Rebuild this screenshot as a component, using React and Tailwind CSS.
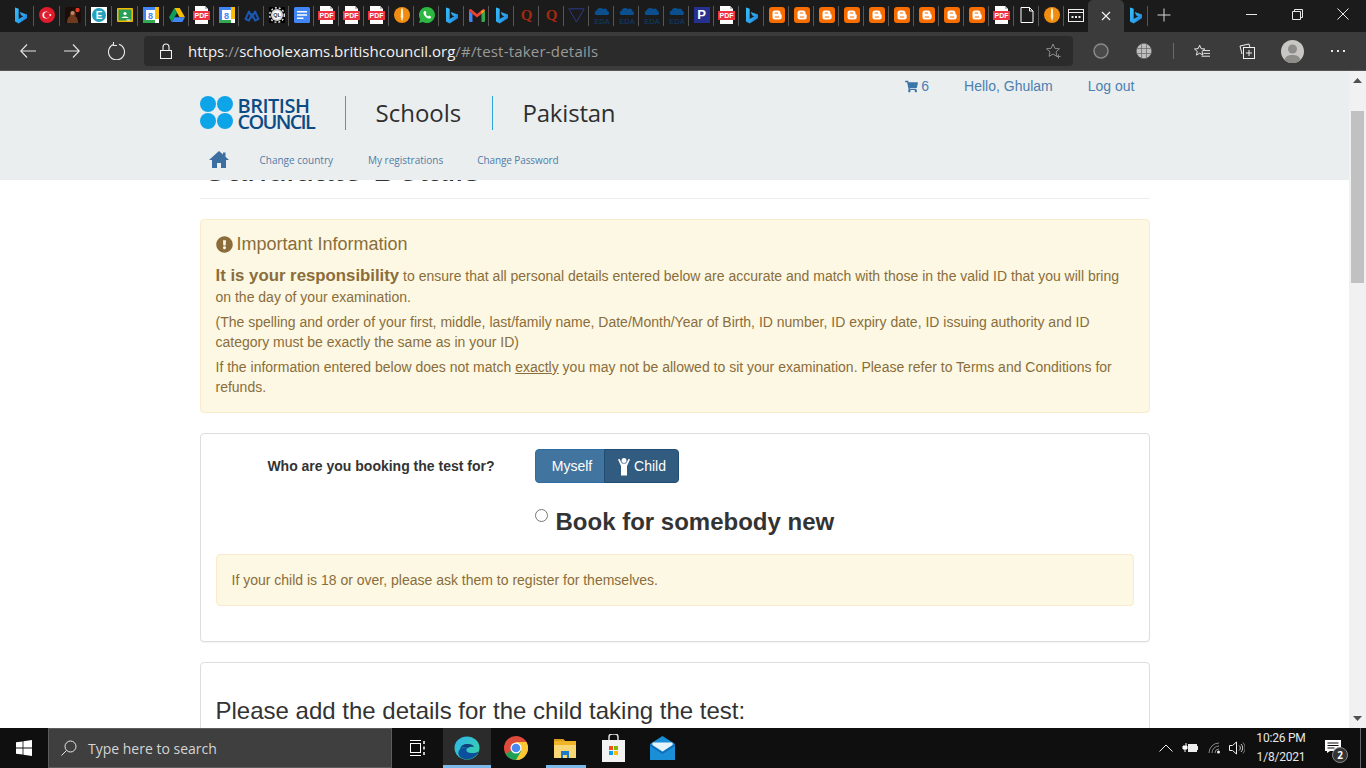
import React from 'react';
import { FaShoppingCart, FaExclamationCircle } from 'react-icons/fa';

const Bing = () => (
  <svg width="12" height="17" viewBox="5 1 13 17.600">
    <defs>
      <linearGradient id="bingGrad" x1="0" y1="0" x2="1" y2="1">
        <stop offset="0" stopColor="#37bdff" />
        <stop offset="0.6" stopColor="#2aa3ea" />
        <stop offset="1" stopColor="#1b66d8" />
      </linearGradient>
    </defs>
    <path d="M5 1l4 1.400v11.200l5-2.900-2.400-1.200-1.500-3.600 8 2.800v4.100L9 18.600l-4-2.200z" fill="url(#bingGrad)" />
  </svg>
);

const Pdf = () => (
  <svg width="17" height="18" viewBox="0 0 17 18">
    <path d="M2 0h10l3 3v15H2z" fill="#fff" />
    <path d="M12 0v3h3z" fill="#bbb" />
    <rect x="0" y="5" width="17" height="9" fill="#ee3340" />
    <text x="8.500" y="12.300" textAnchor="middle" fontSize="7" fontWeight="700" fontFamily="Liberation Sans" fill="#fff">PDF</text>
  </svg>
);

const Calendar = () => (
  <svg width="16" height="16" viewBox="0 0 16 16">
    <rect width="16" height="16" fill="#fff" />
    <path d="M0 0h12v3H3v10H0z" fill="#4285f4" />
    <path d="M12 0h4v12h-4z" fill="#fbbc04" />
    <path d="M0 13h12v3H0z" fill="#34a853" />
    <text x="7.500" y="11.500" textAnchor="middle" fontSize="9" fontWeight="700" fontFamily="Liberation Sans" fill="#4285f4">8</text>
  </svg>
);

const Blogger = () => (
  <svg width="16" height="16" viewBox="0 0 16 16">
    <rect width="16" height="16" rx="3" fill="#f76d00" />
    <path d="M6 3.500h3a2.500 2.500 0 012.500 2.500v.8c0 .5.4.7.7.7.4 0 .5.3.5.6V10a2.500 2.500 0 01-2.500 2.500H6A2.500 2.500 0 013.500 10V6A2.500 2.500 0 016 3.500z" fill="#fff" />
    <path d="M6.200 6h2.400M6.200 10h3.600" stroke="#f76d00" strokeWidth="1.200" strokeLinecap="round" />
  </svg>
);

const OrangeI = () => (
  <svg width="16" height="16" viewBox="0 0 16 16">
    <circle cx="8" cy="8" r="8" fill="#f08c12" />
    <path d="M7.200 1.500h1.600L9.300 10 8 14.500 6.700 10z" fill="#fff3d0" />
  </svg>
);

const Eda = () => (
  <svg width="18" height="18" viewBox="0 0 18 18">
    <path d="M3 9a2.500 2.500 0 01.6-4.600A4 4 0 0110 3a3 3 0 014.600 2.300A2 2 0 0115 9z" fill="#0b4f8f" />
    <text x="9" y="17.500" textAnchor="middle" fontSize="7.500" fontFamily="Liberation Sans" fill="#0b3f75">EDA</text>
  </svg>
);

const Letter = ({ ch }) => (
  <span className="font-['Liberation_Serif',serif] text-[15px] leading-none font-bold text-[#a02a10]">{ch}</span>
);

const tabIcons = {
  bing: <Bing />,
  pdf: <Pdf />,
  cal: <Calendar />,
  blogger: <Blogger />,
  orange: <OrangeI />,
  eda: <Eda />,
  q: <Letter ch="Q" />,
  target: (
    <svg width="16" height="16" viewBox="0 0 16 16">
      <circle cx="8" cy="8" r="8" fill="#e01b2c" />
      <circle cx="7" cy="8" r="3.600" fill="#fff" />
      <circle cx="8" cy="8" r="2.900" fill="#e01b2c" />
      <circle cx="11.300" cy="8" r="1" fill="#fff" />
    </svg>
  ),
  photo: (
    <svg width="16" height="16" viewBox="0 0 16 16">
      <rect width="16" height="16" rx="2" fill="#1b0d08" />
      <path d="M2 16c0-4 1-6 3-7 0-4 2-6 4-5s2 4 1 5c2 1 3 3 3 7z" fill="#6e3a20" />
      <circle cx="7.500" cy="6" r="2" fill="#b98a68" />
      <circle cx="12.500" cy="3" r="2.200" fill="#e33a22" />
    </svg>
  ),
  e: (
    <svg width="16" height="16" viewBox="0 0 16 16">
      <rect width="16" height="16" fill="#fff" />
      <circle cx="8" cy="8" r="7" fill="#25a0bd" />
      <text x="8" y="11.500" textAnchor="middle" fontSize="10" fontWeight="700" fontFamily="Liberation Sans" fill="#fff">E</text>
    </svg>
  ),
  classroom: (
    <svg width="16" height="14" viewBox="0 0 16 14">
      <rect width="16" height="14" rx="1" fill="#f5b800" />
      <rect x="1.500" y="1.500" width="13" height="11" fill="#2a9d57" />
      <circle cx="8" cy="5.500" r="1.600" fill="#fff" />
      <path d="M4.500 10c.5-2 6.500-2 7 0z" fill="#fff" />
      <path d="M9.500 11.500h4v1h-4z" fill="#fff" />
    </svg>
  ),
  drive: (
    <svg width="16" height="14" viewBox="0 0 16 14">
      <path d="M5.300 0h5.400L16 9.200h-5.400z" fill="#fbbc04" />
      <path d="M5.300 0L0 9.200 2.700 14l5.300-9.200z" fill="#0f9d58" />
      <path d="M2.700 14h10.600L16 9.200H5.400z" fill="#4285f4" />
    </svg>
  ),
  meta: (
    <svg width="16" height="14" viewBox="0 0 16 14">
      <path d="M1.500 11L5 3.500l3 6 3-6 3.500 7.500-3.500 1.500L8 6l-3 6.500z" fill="none" stroke="#1a56b0" strokeWidth="2" strokeLinejoin="round" />
    </svg>
  ),
  gear: (
    <svg width="16" height="16" viewBox="0 0 16 16">
      <rect width="16" height="16" fill="#000" />
      <circle cx="8" cy="8" r="6" fill="#d6d6d6" />
      <circle cx="8" cy="8" r="7.300" fill="none" stroke="#d6d6d6" strokeWidth="1.500" strokeDasharray="2 2" />
      <circle cx="8" cy="8" r="4.200" fill="#fff" />
      <text x="8" y="10" textAnchor="middle" fontSize="5.500" fontWeight="700" fontFamily="Liberation Sans" fill="#333">QL</text>
    </svg>
  ),
  docs: (
    <svg width="16" height="16" viewBox="0 0 16 16">
      <rect width="16" height="16" rx="1.500" fill="#4285f4" />
      <path d="M3 4h10v1.400H3zM3 7.300h10v1.400H3zM3 10.600h6.500V12H3z" fill="#fff" />
    </svg>
  ),
  whatsapp: (
    <svg width="16" height="16" viewBox="0 0 16 16">
      <path d="M8 0a8 8 0 00-6.800 12.200L0 16l3.900-1.100A8 8 0 108 0z" fill="#2bb741" />
      <path d="M5.500 4c-.8.600-1.200 1.700-.8 3 .6 2 2.500 3.900 4.500 4.500 1.300.4 2.300 0 3-.9l-.3-1.200-1.900-.8-.8.900c-1-.4-2-1.400-2.500-2.500l.8-.9-.7-1.900z" fill="#fff" />
    </svg>
  ),
  gmail: (
    <svg width="16" height="13" viewBox="0 0 16 13">
      <path d="M0 1.500v10c0 .8.500 1.500 1.200 1.500H3.500V5z" fill="#4285f4" />
      <path d="M16 1.500v10c0 .8-.500 1.500-1.200 1.500h-2.300V5z" fill="#34a853" />
      <path d="M0 1.500C0 .2 1.500-.4 2.500.4L8 5l5.500-4.600c1-.8 2.500-.2 2.500 1.100L12.500 5 8 8.500 3.500 5z" fill="#ea4335" />
      <path d="M12.500 1.800L16 1.500 12.500 5z" fill="#fbbc04" />
    </svg>
  ),
  tri: (
    <svg width="17" height="15" viewBox="0 0 17 15">
      <path d="M.8.800h15.400L8.500 14z" fill="none" stroke="#2d3a8c" strokeWidth="1" />
    </svg>
  ),
  p: (
    <span className="flex h-[16px] w-[16px] items-center justify-center bg-[#26308f] font-['Liberation_Sans',sans-serif] text-[13px] font-bold text-white">P</span>
  ),
  doc: (
    <svg width="14" height="16" viewBox="0 0 14 16">
      <path d="M1 .5h8.500L13 4v11.500H1zM9.500.5V4H13" fill="none" stroke="#fff" strokeWidth="1" />
    </svg>
  ),
};

const tabs = [
  'bing', 'target', 'photo', 'e', 'classroom', 'cal',
  'drive', 'pdf', 'cal', 'meta', 'gear', 'docs', 'pdf', 'pdf', 'pdf', 'orange', 'whatsapp', 'bing', 'gmail', 'bing',
  'q', 'q', 'tri', 'eda', 'eda', 'eda', 'eda', 'p', 'pdf', 'bing',
  'blogger', 'blogger', 'blogger', 'blogger', 'blogger', 'blogger', 'blogger', 'blogger', 'blogger',
  'pdf', 'doc', 'orange',
];

const TabStrip = () => (
  <div className="flex h-[32px] bg-[#1b1b1b] pl-[8px]">
    {tabs.map((name, i) => (
      <div key={i} className={`relative flex h-full shrink-0 items-center justify-center pb-[2px] ${i < 6 ? 'w-[26px]' : 'w-[25px]'}`}>
        {tabIcons[name]}
        <span className="absolute top-[6px] right-0 h-[20px] w-px bg-[#565656]" />
      </div>
    ))}
    <div className="flex h-full w-[24px] shrink-0 items-center justify-center pb-[2px]">
      <svg width="16" height="13" viewBox="0 0 16 13">
        <rect x=".5" y=".5" width="15" height="12" fill="none" stroke="#eee" />
        <path d="M1 3.500h14" stroke="#eee" />
        <path d="M3.500 7h2v2h-2zM7 7h2v2H7zM10.500 7h2v2h-2z" fill="#eee" />
      </svg>
    </div>
    <div className="flex h-full w-[36px] shrink-0 items-center justify-center rounded-t-[5px] bg-[#3b3b3b]">
      <svg width="10" height="10" viewBox="0 0 10 10">
        <path d="M1 1l8 8M9 1l-8 8" stroke="#f0f0f0" strokeWidth="1.200" />
      </svg>
    </div>
    <div className="relative flex h-full w-[24px] shrink-0 items-center justify-center pb-[2px]">
      <Bing />
      <span className="absolute top-[6px] right-0 h-[20px] w-px bg-[#565656]" />
    </div>
    <div className="flex h-full w-[32px] shrink-0 items-center justify-center pb-[2px]">
      <svg width="14" height="14" viewBox="0 0 14 14">
        <path d="M7 .5v13M.5 7h13" stroke="#d8d8d8" strokeWidth="1" />
      </svg>
    </div>
    <div className="ml-auto flex h-full">
      <div className="flex w-[46px] items-center justify-center pb-[4px]">
        <svg width="11" height="1" viewBox="0 0 11 1"><path d="M0 .5h11" stroke="#e8e8e8" /></svg>
      </div>
      <div className="flex w-[46px] items-center justify-center pb-[4px]">
        <svg width="11" height="11" viewBox="0 0 11 11">
          <path d="M.5 2.500h8v8h-8zM2.500 2.500v-2h8v8h-2" fill="none" stroke="#e8e8e8" />
        </svg>
      </div>
      <div className="flex w-[46px] items-center justify-center pb-[4px]">
        <svg width="12" height="12" viewBox="0 0 12 12"><path d="M.5.500l11 11M11.500.500l-11 11" stroke="#e8e8e8" /></svg>
      </div>
    </div>
  </div>
);

const Toolbar = () => (
  <div className="flex h-[39px] items-start border-b border-[#555] bg-[#3b3b3b]">
    <div className="flex h-[38px] w-[144px] shrink-0 items-center">
      <div className="flex w-[56px] justify-center">
        <svg width="16" height="14" viewBox="0 0 16 14"><path d="M7 .5L.8 7 7 13.500M.8 7H16" fill="none" stroke="#e6e6e6" strokeWidth="1.100" /></svg>
      </div>
      <div className="flex w-[32px] justify-center">
        <svg width="16" height="14" viewBox="0 0 16 14"><path d="M9 .5L15.200 7 9 13.500M15.200 7H0" fill="none" stroke="#e6e6e6" strokeWidth="1.100" /></svg>
      </div>
      <div className="flex w-[56px] justify-center">
        <svg width="17" height="18" viewBox="0 0 17 18"><path d="M6 2.300A8 8 0 1011 2.300M5.500 0v3.500H9" fill="none" stroke="#e6e6e6" strokeWidth="1.100" /></svg>
      </div>
    </div>
    <div className="mt-[4px] flex h-[30px] w-[929px] shrink-0 items-center rounded-[4px] bg-[#2b2b2b] pl-[16px] pr-[11px] font-['Open_Sans',sans-serif] text-[15px]">
      <svg width="12" height="16" viewBox="0 0 12 16" className="mr-[16px] shrink-0">
        <path d="M.5 7.500h11v8H.5zM3 7.500V4a3 3 0 016 0v3.500" fill="none" stroke="#f2f2f2" strokeWidth="1.100" />
      </svg>
      <span className="text-[#f2f2f2]">https</span>
      <span className="text-[#9a9a9a]">://</span>
      <span className="text-[#f2f2f2]">schoolexams.britishcouncil.org</span>
      <span className="tracking-[0.2px] text-[#9a9a9a]">/#/test-taker-details</span>
      <svg width="16" height="16" viewBox="0 0 16 16" className="ml-auto shrink-0">
        <path d="M7 1l1.900 4.400 4.600.400-3.500 3 1 4.600L7 11l-4 2.400 1-4.600-3.500-3 4.600-.400z" fill="none" stroke="#8c8c8c" />
        <path d="M12.500 11.500v4M10.500 13.500h4" stroke="#8c8c8c" />
      </svg>
    </div>
    <div className="flex h-[38px] flex-1 items-center">
      <div className="flex w-[56px] justify-center">
        <svg width="16" height="16" viewBox="0 0 16 16"><circle cx="8" cy="8" r="7" fill="#4a4a4a" stroke="#8a8a8a" strokeWidth="1.500" /></svg>
      </div>
      <div className="flex w-[30px] justify-center">
        <svg width="16" height="16" viewBox="0 0 16 16">
          <circle cx="8" cy="8" r="7.500" fill="#bdbdbd" />
          <path d="M0 5.500h16M0 10.500h16M5.500 0v16M10.500 0v16" stroke="#666" strokeWidth=".7" />
        </svg>
      </div>
      <span className="ml-[14px] h-[16px] w-px bg-[#6a6a6a]" />
      <div className="ml-[20px] flex w-[16px] justify-center">
        <svg width="17" height="15" viewBox="0 0 17 15">
          <path d="M6 .8l1.600 3.700 3.900.300-3 2.600.900 3.900L6 9.300l-3.400 2 .9-3.900-3-2.600 3.900-.300z" fill="none" stroke="#f0f0f0" />
          <path d="M9.500 6.500H17M10 9.500h7M8 12.500h9" stroke="#f0f0f0" />
        </svg>
      </div>
      <div className="ml-[29px] flex w-[16px] justify-center">
        <svg width="16" height="16" viewBox="0 0 16 16">
          <path d="M3 11L1 3l9-2 .8 3" fill="none" stroke="#f0f0f0" />
          <rect x="4.500" y="4.500" width="11" height="11" fill="#3b3b3b" stroke="#f0f0f0" />
          <path d="M10 7v6M7 10h6" stroke="#f0f0f0" />
        </svg>
      </div>
      <div className="ml-[26px] flex w-[23px] justify-center">
        <svg width="23" height="23" viewBox="0 0 23 23">
          <circle cx="11.500" cy="11.500" r="11.500" fill="#c9c7c3" />
          <circle cx="11.500" cy="9" r="4.500" fill="#8f8d8a" />
          <path d="M3.500 20c1-4 4-5 8-5s7 1 8 5a11.500 11.500 0 01-16 0z" fill="#8f8d8a" />
        </svg>
      </div>
      <div className="ml-[26px] flex w-[16px] justify-center gap-[4px]">
        <span className="h-[2px] w-[2px] bg-[#e6e6e6]" />
        <span className="h-[2px] w-[2px] bg-[#e6e6e6]" />
        <span className="h-[2px] w-[2px] bg-[#e6e6e6]" />
      </div>
    </div>
  </div>
);

const SiteHeader = () => (
  <header className="relative z-10 h-[109px] bg-[#ebeeef]">
    <div className="mx-auto flex w-[950px] flex-col">
      <div className="flex">
        <div className="flex pt-[25px]">
          <div className="grid h-[33px] w-[33px] grid-cols-2 gap-px">
            <span className="rounded-full bg-[#0ea4e8]" />
            <span className="rounded-full bg-[#0ea4e8]" />
            <span className="rounded-full bg-[#0ea4e8]" />
            <span className="rounded-full bg-[#0ea4e8]" />
          </div>
          <div className="ml-[5px] flex w-[77px] flex-col font-['Open_Sans',sans-serif] text-[20px] leading-[15.500px] font-semibold text-[#0b4c85]">
            <span className="mt-[2px] tracking-[-0.500px]">BRITISH</span>
            <span className="tracking-[-1.700px]">COUNCIL</span>
          </div>
        </div>
        <div className="mt-[25px] ml-[30px] flex h-[34px] w-[117px] items-center border-l border-[#2ba6dc] pl-[30px] font-['Open_Sans',sans-serif] text-[24px] text-[#2f2f2f]">Schools</div>
        <div className="mt-[25px] ml-[30px] flex h-[34px] items-center border-l border-[#2ba6dc] pl-[30px] font-['Open_Sans',sans-serif] text-[24px] tracking-[-0.200px] text-[#2f2f2f]">Pakistan</div>
        <div className="ml-auto flex items-center self-start pt-[7px] pr-[15px] font-['Liberation_Sans',sans-serif] text-[14px] leading-[16px] text-[#4a80b0]">
          <FaShoppingCart className="text-[13px] text-[#3c76a8]" />
          <span className="ml-[3px]">6</span>
          <span className="ml-[35px]">Hello, Ghulam</span>
          <span className="ml-[35px]">Log out</span>
        </div>
      </div>
      <nav className="mt-[22px] flex items-center font-['Open_Sans',sans-serif] text-[10px] leading-[16px] font-medium text-[#4f7ca6]">
        <svg width="20" height="17" viewBox="0 0 20 17" className="ml-[9px] -mt-[1px]">
          <path d="M10 0L0 9h3v8h5v-5h4v5h5V9h3l-3.500-3.200V1.500h-2.500v2z" fill="#3c6fa0" />
        </svg>
        <span className="ml-[31px]">Change country</span>
        <span className="ml-[35px]">My registrations</span>
        <span className="ml-[34px] tracking-[-0.100px]">Change Password</span>
      </nav>
    </div>
  </header>
);

const Content = () => (
  <div className="mx-auto -mt-[31px] flex w-[950px] flex-col font-['Liberation_Sans',sans-serif] text-[14px] text-[#333]">
    <h1 className="border-b border-[#eee] pb-[9px] pl-[2px] text-[36px] leading-[40px] tracking-[-0.300px] text-[#333]">Candidate Details</h1>
    <div className="mt-[20px] rounded-[4px] border border-[#faebcc] bg-[#fcf8e3] px-[15px] pt-[14px] pb-[15px] text-[#8a6d3b]">
      <h4 className="flex items-center text-[18px] leading-[20px]">
        <FaExclamationCircle className="mr-[4px] text-[17px]" />
        Important Information
      </h4>
      <p className="mt-[11px] leading-[21px]">
        <strong className="text-[16.800px]">It is your responsibility</strong> to ensure that all personal details entered below are accurate and match with those in the valid ID that you will bring on the day of your examination.
      </p>
      <p className="mt-[4px] leading-[20px]">(The spelling and order of your first, middle, last/family name, Date/Month/Year of Birth, ID number, ID expiry date, ID issuing authority and ID category must be exactly the same as in your ID)</p>
      <p className="mt-[5px] leading-[20px]">
        If the information entered below does not match <u>exactly</u> you may not be allowed to sit your examination. Please refer to Terms and Conditions for refunds.
      </p>
    </div>

    <section className="mt-[20px] h-[209px] rounded-[4px] border border-[#ddd] bg-white px-[15px] pt-[15px] shadow-[0_1px_1px_rgba(0,0,0,0.05)]">
      <div className="flex items-center">
        <label className="w-[279px] text-right font-bold">Who are you booking the test for?</label>
        <div className="ml-[40px] flex h-[34px]">
          <button className="w-[70px] rounded-l-[4px] border border-[#2e6da4] bg-[#41759f] pl-[5px] text-white">Myself</button>
          <button className="-ml-px flex w-[75px] items-center justify-center rounded-r-[4px] border border-[#204d74] bg-[#315b7f] text-white">
            <svg width="14" height="19" viewBox="0 0 14 19" className="mr-[3px] ml-[1px]">
              <circle cx="7" cy="3.500" r="2.500" fill="#fff" />
              <path d="M1 2.500l1.300-.800L5 6.500h4l2.700-4.800 1.300.8L10 9v9.500H4V9z" fill="#fff" />
            </svg>
            Child
          </button>
        </div>
      </div>
      <div className="mt-[18px] ml-[319px] flex items-start">
        <input type="radio" className="mt-[8px] h-[13px] w-[13px] shrink-0 accent-[#555]" readOnly />
        <span className="ml-[8px] text-[24px] leading-[42px] font-bold">Book for somebody new</span>
      </div>
      <div className="mt-[11px] rounded-[4px] border border-[#faebcc] bg-[#fcf8e3] px-[15px] py-[15px] leading-[20px] text-[#8a6d3b]">
        If your child is 18 or over, please ask them to register for themselves.
      </div>
    </section>

    <section className="mt-[20px] h-[100px] rounded-[4px] border border-[#ddd] bg-white px-[15px] pt-[30px]">
      <h3 className="text-[24px] leading-[36px]">Please add the details for the child taking the test:</h3>
    </section>
  </div>
);

const Scrollbar = () => (
  <div className="flex w-[17px] shrink-0 flex-col items-center bg-[#f1f1f1]">
    <svg width="9" height="5" viewBox="0 0 9 5" className="mt-[7px]"><path d="M4.500 0L9 5H0z" fill="#505050" /></svg>
    <div className="mt-[28px] h-[172px] w-[13px] bg-[#c1c1c1]" />
    <svg width="9" height="5" viewBox="0 0 9 5" className="mt-auto mb-[7px]"><path d="M4.500 5L9 0H0z" fill="#505050" /></svg>
  </div>
);

const Taskbar = () => (
  <div className="flex h-[40px] items-stretch bg-[#0f0f0f] font-['Open_Sans',sans-serif] text-[#e6e6e6]">
    <div className="flex w-[48px] items-center justify-center">
      <svg width="16" height="16" viewBox="0 0 16 16">
        <path d="M0 2.300L6.600 1.400v6.200H0zM7.400 1.300L16 0v7.600H7.400zM0 8.400h6.600v6.200L0 13.700zM7.400 8.400H16V16l-8.600-1.300z" fill="#fff" />
      </svg>
    </div>
    <div className="flex w-[344px] items-center border border-[#5c5c5c] bg-[#3f3f3f] pl-[12px] text-[14px] text-[#d4d4d4]">
      <svg width="16" height="16" viewBox="0 0 16 16">
        <circle cx="9.500" cy="6.500" r="5.500" fill="none" stroke="#e8e8e8" />
        <path d="M5.500 10.500L.5 15.500" stroke="#e8e8e8" />
      </svg>
      <span className="ml-[11px]">Type here to search</span>
    </div>
    <div className="flex w-[51px] items-center justify-center">
      <svg width="17" height="16" viewBox="0 0 17 16">
        <path d="M1 .5h11M1 15.500h11" stroke="#fff" />
        <rect x="1.500" y="3.500" width="10" height="9" fill="none" stroke="#fff" />
        <path d="M15 1v3M15 6.500v3M15 12v3" stroke="#fff" strokeWidth="1.500" />
      </svg>
    </div>
    <div className="flex w-[48px] items-center justify-center border-b-[3px] border-[#7cb8e8] bg-[#2b2b2b] pt-[3px]">
      <svg width="26" height="24" viewBox="0 0 26 30" preserveAspectRatio="none">
        <defs>
          <linearGradient id="edgeGrad" x1="0" y1="0" x2="1" y2="1">
            <stop offset="0" stopColor="#2fb6ee" />
            <stop offset="1" stopColor="#39d3a0" />
          </linearGradient>
        </defs>
        <ellipse cx="13" cy="15" rx="12.500" ry="14.500" fill="url(#edgeGrad)" />
        <path d="M25 19c-2 6-7 10-12 10C6 29 3 23 5 18c1.500-3.500 6-5 9-3-2 1-2.500 4 .5 5.500 3 1.500 7.500 1 10.500-1.500z" fill="#0c4f9c" />
        <path d="M14 10c-4-.5-7 2-8 6 1-2 5-3 8-1 1-1.500 4-2 6-1-.5-2.500-3-4-6-4z" fill="#0f3f7a" />
      </svg>
    </div>
    <div className="flex w-[50px] items-center justify-center">
      <svg width="24" height="24" viewBox="0 0 24 24">
        <circle cx="12" cy="12" r="12" fill="#dd4b3d" />
        <path d="M12 12L1.600 18A12 12 0 0012 24a12 12 0 0010.400-6z" fill="#1fa155" />
        <path d="M12 6h10.400A12 12 0 0112 24l5.200-9z" fill="#fcc934" />
        <circle cx="12" cy="12" r="5.500" fill="#fff" />
        <circle cx="12" cy="12" r="4.300" fill="#4a88ee" />
      </svg>
    </div>
    <div className="relative flex w-[48px] items-center justify-center">
      <svg width="24" height="22" viewBox="0 0 24 22">
        <path d="M1 2h9l2 2h11v17H1z" fill="#f0b429" />
        <path d="M1 2h9l2 2H1z" fill="#d89b17" />
        <path d="M1 8h22v13H1z" fill="#f8d775" />
        <path d="M8 14h8v7h-2v-3h-4v3H8z" fill="#1f79c9" />
      </svg>
      <span className="absolute right-[3px] bottom-0 left-[5px] h-[3px] bg-[#7cb8e8]" />
    </div>
    <div className="flex w-[49px] items-center justify-center">
      <svg width="23" height="28" viewBox="0 0 23 28">
        <path d="M7 7V3a3 3 0 013-3h3a3 3 0 013 3v4" fill="none" stroke="#ddd" strokeWidth="1.500" />
        <rect y="6" width="23" height="22" fill="#f3f3f3" />
        <path d="M7 12h4v4H7z" fill="#f25022" />
        <path d="M12 12h4v4h-4z" fill="#7fba00" />
        <path d="M7 17h4v4H7z" fill="#00a4ef" />
        <path d="M12 17h4v4h-4z" fill="#ffb900" />
      </svg>
    </div>
    <div className="flex w-[49px] items-center justify-center">
      <svg width="25" height="24" viewBox="0 0 25 24">
        <path d="M0 8L12.500 0 25 8v16H0z" fill="#1a8fd8" />
        <path d="M0 8l12.500 8L25 8v2l-12.500 8L0 10z" fill="#0c6db5" />
        <path d="M2.500 9V6.500h20V9l-10 6.500z" fill="#e8f4fc" />
      </svg>
    </div>
    <div className="ml-auto flex items-center">
      <svg width="14" height="8" viewBox="0 0 14 8"><path d="M.5 7.500L7 1l6.500 6.500" fill="none" stroke="#eee" /></svg>
      <svg width="16" height="10" viewBox="0 0 16 10" className="ml-[9px]">
        <path d="M4 0v3M1 3h4v3H1zM3 6v3" stroke="#fff" fill="#fff" />
        <rect x="6" y="1" width="9" height="8" fill="#eee" />
        <path d="M15 3h1v4h-1z" fill="#eee" />
      </svg>
      <svg width="14" height="12" viewBox="0 0 14 12" className="ml-[10px]">
        <path d="M1 11a10 10 0 0110-10M4 11a7 7 0 017-7M7 11a4 4 0 014-4" fill="none" stroke="#888" />
        <circle cx="10.500" cy="10" r="1.500" fill="#eee" />
      </svg>
      <svg width="16" height="14" viewBox="0 0 16 14" className="ml-[7px]">
        <path d="M.5 4.500h3L7.500 1v12l-4-3.500h-3z" fill="none" stroke="#eee" />
        <path d="M10 4.500a3 3 0 010 5M12 3a5.500 5.500 0 010 8" fill="none" stroke="#ccc" />
        <path d="M14 1.500a8 8 0 010 11" fill="none" stroke="#777" />
      </svg>
      <div className="ml-[7px] flex w-[58px] flex-col items-center font-['Roboto',sans-serif] text-[12px] leading-[19px] tracking-[-0.200px]">
        <span>10:26 PM</span>
        <span>1/8/2021</span>
      </div>
      <div className="relative mr-[5px] ml-[15px] h-[40px] w-[36px] border-r border-[#666]">
        <svg width="16" height="13" viewBox="0 0 16 13" className="absolute top-[12px] left-0">
          <path d="M0 0h16v11H5l-3 2v-2H0z" fill="#fff" />
          <path d="M2.500 3h11M2.500 5.500h11M2.500 8h7" stroke="#0f0f0f" />
        </svg>
        <span className="absolute top-[19px] left-[7px] flex h-[16px] w-[16px] items-center justify-center rounded-full border border-[#888] bg-[#333] text-[10px] font-bold text-white">2</span>
      </div>
    </div>
  </div>
);

export default function App() {
  return (
    <div className="flex h-[768px] w-[1366px] flex-col overflow-hidden bg-white">
      <TabStrip />
      <Toolbar />
      <div className="flex min-h-0 flex-1">
        <div className="min-w-0 flex-1 overflow-hidden bg-white">
          <SiteHeader />
          <Content />
        </div>
        <Scrollbar />
      </div>
      <Taskbar />
    </div>
  );
}
